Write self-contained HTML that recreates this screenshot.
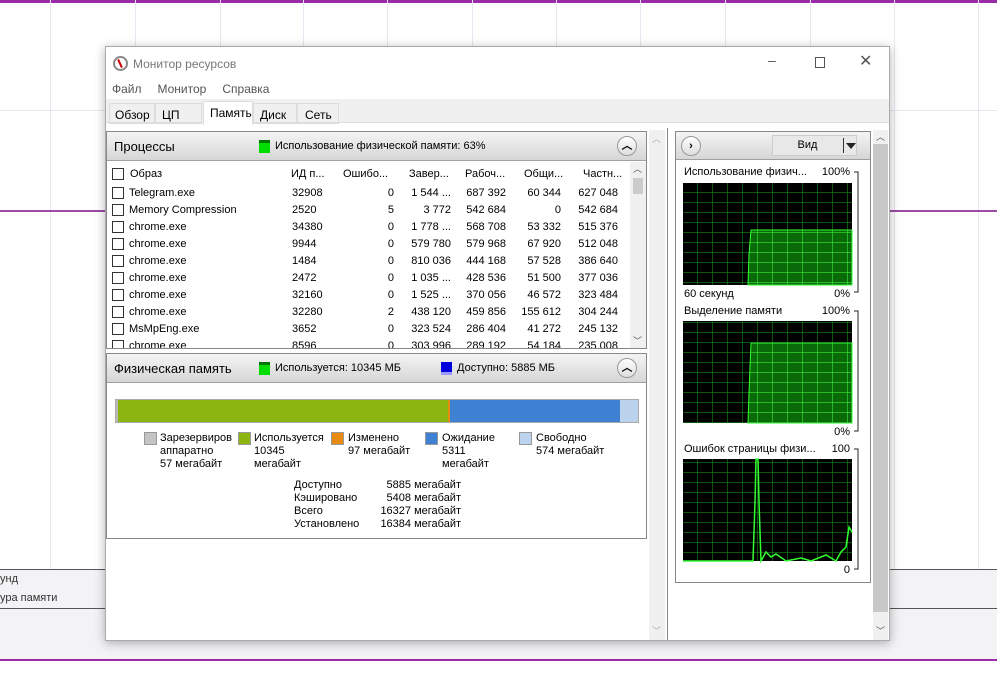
<!DOCTYPE html><html><head><meta charset="utf-8"><style>
*{box-sizing:border-box;margin:0;padding:0}
body{width:997px;height:687px;position:relative;overflow:hidden;background:#fff;font-family:"Liberation Sans","Noto Sans CJK SC",sans-serif;font-size:11px;color:#000}
.a{position:absolute}
.vl{position:absolute;top:0;width:1px;height:569px;background:#ece4f0}
.hdr{background:linear-gradient(#f4f4f4,#d6d6d6);border-bottom:1px solid #a0a0a0}
.cb{position:absolute;width:12px;height:12px;border:1px solid #333;background:#fff}
.up{position:absolute;width:20px;height:20px;border-radius:50%;border:1px solid #999;background:linear-gradient(#fff,#ddd);text-align:center;font-size:11px;line-height:18px;font-weight:bold}
.r{text-align:right}
.sq{position:absolute;width:13px;height:13px;border:1px solid #999}
td{padding:0;vertical-align:middle}
</style></head><body>
<div class="a" style="left:0;top:0;width:997px;height:3px;background:#9b2aa6"></div>
<div class="vl" style="left:50px"></div><div class="vl" style="left:135px"></div><div class="vl" style="left:220px"></div><div class="vl" style="left:303px"></div><div class="vl" style="left:387px"></div><div class="vl" style="left:472px"></div><div class="vl" style="left:556px"></div><div class="vl" style="left:640px"></div><div class="vl" style="left:725px"></div><div class="vl" style="left:810px"></div><div class="vl" style="left:894px"></div><div class="vl" style="left:978px"></div>
<div class="a" style="left:0;top:110px;width:997px;height:1px;background:#ece4f0"></div>
<div class="a" style="left:0;top:210px;width:997px;height:2px;background:#9b4aa6"></div>
<div class="a" style="left:0;top:569px;width:997px;height:90px;background:#f3f2f5;border-top:1px solid #555"></div>
<div class="a" style="left:0;top:608px;width:997px;height:1px;background:#555"></div>
<div class="a" style="left:0;top:573px;color:#333">унд</div>
<div class="a" style="left:0;top:592px;color:#333">ура памяти</div>
<div class="a" style="left:0;top:659px;width:997px;height:2px;background:#9b2aa6"></div>

<div class="a" style="left:105px;top:46px;width:785px;height:595px;background:#fff;border:1px solid #aaa;box-shadow:0 2px 10px rgba(0,0,0,.3)">
 <div class="a" style="left:7px;top:9px;width:15px;height:15px;border-radius:50%;border:2px solid #888;background:#fff"><div class="a" style="left:4px;top:1px;width:2px;height:9px;background:#c00;transform:rotate(-25deg)"></div></div>
 <div class="a" style="left:27px;top:10px;font-size:12px;color:#777">Монитор ресурсов</div>
 <div class="a" style="left:662px;top:5px;font-size:14px;color:#555">–</div>
 <div class="a" style="left:709px;top:10px;width:10px;height:11px;border:1px solid #555"></div>
 <div class="a" style="left:753px;top:4px;font-size:16px;color:#555">✕</div>
 <div class="a" style="left:6px;top:35px;font-size:12px;color:#555;word-spacing:2px">Файл &nbsp; Монитор &nbsp; Справка</div>
 <div class="a" style="left:0;top:52px;width:783px;height:24px;background:#f0f0f0;border-bottom:1px solid #ddd"></div>
 <div class="a" style="left:3px;top:56px;width:46px;height:21px;border:1px solid #ddd;font-size:12px;padding:4px 5px">Обзор</div>
 <div class="a" style="left:49px;top:56px;width:47px;height:21px;border:1px solid #ddd;font-size:12px;padding:4px 6px">ЦП</div>
 <div class="a" style="left:97px;top:54px;width:50px;height:24px;background:#fff;border:1px solid #ddd;border-bottom:0;font-size:12px;padding:4px 6px">Память</div>
 <div class="a" style="left:147px;top:56px;width:44px;height:21px;border:1px solid #ddd;font-size:12px;padding:4px 6px">Диск</div>
 <div class="a" style="left:191px;top:56px;width:42px;height:21px;border:1px solid #ddd;font-size:12px;padding:4px 7px">Сеть</div>
</div>

<!-- processes -->
<div class="a" style="left:106px;top:131px;width:541px;height:218px;border:1px solid #888;background:#fff;overflow:hidden">
 <div class="a hdr" style="left:0;top:0;width:539px;height:29px"></div>
 <div class="a" style="left:7px;top:7px;font-size:13px">Процессы</div>
 <div class="a" style="left:152px;top:8px;width:11px;height:13px;background:#0d0;border-top:3px solid #070"></div>
 <div class="a" style="left:168px;top:8px">Использование физической памяти: 63%</div>
 <div class="up" style="left:510px;top:4px">︿</div>
 <div class="cb" style="left:5px;top:36px"></div><div class="a" style="left:23px;top:36px">Образ</div>
 <div class="a" style="left:184px;top:36px">ИД п...</div><div class="a" style="left:236px;top:36px">Ошибо...</div><div class="a" style="left:302px;top:36px">Завер...</div><div class="a" style="left:358px;top:36px">Рабоч...</div><div class="a" style="left:417px;top:36px">Общи...</div><div class="a" style="left:476px;top:36px">Частн...</div>
 <div class="a" style="left:523px;top:30px;width:16px;height:188px;background:#f0f0f0"><div class="a" style="left:3px;top:16px;width:10px;height:16px;background:#ccc"></div><div class="a" style="left:3px;top:0;font-size:9px;color:#555">︿</div><div class="a" style="left:3px;top:172px;font-size:9px;color:#555">﹀</div></div>
</div>

<div class="a" style="left:107px;top:184px;width:522px;height:164px;overflow:hidden">
<table style="border-collapse:collapse;font-size:11px;position:absolute;left:0;top:0">
<colgroup><col style="width:22px"><col style="width:163px"><col style="width:47px"><col style="width:55px"><col style="width:57px"><col style="width:55px"><col style="width:55px"><col style="width:57px"></colgroup>
<tr style="height:17px"><td><div class="cb" style="position:relative;left:5px"></div></td><td>Telegram.exe</td><td>32908</td><td class="r">0</td><td class="r">1 544 ...</td><td class="r">687 392</td><td class="r">60 344</td><td class="r">627 048</td></tr>
<tr style="height:17px"><td><div class="cb" style="position:relative;left:5px"></div></td><td>Memory Compression</td><td>2520</td><td class="r">5</td><td class="r">3 772</td><td class="r">542 684</td><td class="r">0</td><td class="r">542 684</td></tr>
<tr style="height:17px"><td><div class="cb" style="position:relative;left:5px"></div></td><td>chrome.exe</td><td>34380</td><td class="r">0</td><td class="r">1 778 ...</td><td class="r">568 708</td><td class="r">53 332</td><td class="r">515 376</td></tr>
<tr style="height:17px"><td><div class="cb" style="position:relative;left:5px"></div></td><td>chrome.exe</td><td>9944</td><td class="r">0</td><td class="r">579 780</td><td class="r">579 968</td><td class="r">67 920</td><td class="r">512 048</td></tr>
<tr style="height:17px"><td><div class="cb" style="position:relative;left:5px"></div></td><td>chrome.exe</td><td>1484</td><td class="r">0</td><td class="r">810 036</td><td class="r">444 168</td><td class="r">57 528</td><td class="r">386 640</td></tr>
<tr style="height:17px"><td><div class="cb" style="position:relative;left:5px"></div></td><td>chrome.exe</td><td>2472</td><td class="r">0</td><td class="r">1 035 ...</td><td class="r">428 536</td><td class="r">51 500</td><td class="r">377 036</td></tr>
<tr style="height:17px"><td><div class="cb" style="position:relative;left:5px"></div></td><td>chrome.exe</td><td>32160</td><td class="r">0</td><td class="r">1 525 ...</td><td class="r">370 056</td><td class="r">46 572</td><td class="r">323 484</td></tr>
<tr style="height:17px"><td><div class="cb" style="position:relative;left:5px"></div></td><td>chrome.exe</td><td>32280</td><td class="r">2</td><td class="r">438 120</td><td class="r">459 856</td><td class="r">155 612</td><td class="r">304 244</td></tr>
<tr style="height:17px"><td><div class="cb" style="position:relative;left:5px"></div></td><td>MsMpEng.exe</td><td>3652</td><td class="r">0</td><td class="r">323 524</td><td class="r">286 404</td><td class="r">41 272</td><td class="r">245 132</td></tr>
<tr style="height:17px"><td><div class="cb" style="position:relative;left:5px"></div></td><td>chrome.exe</td><td>8596</td><td class="r">0</td><td class="r">303 996</td><td class="r">289 192</td><td class="r">54 184</td><td class="r">235 008</td></tr>
</table></div>

<!-- physical memory -->
<div class="a" style="left:106px;top:353px;width:541px;height:186px;border:1px solid #888;background:#fff">
 <div class="a hdr" style="left:0;top:0;width:539px;height:29px"></div>
 <div class="a" style="left:7px;top:7px;font-size:13px">Физическая память</div>
 <div class="a" style="left:152px;top:8px;width:11px;height:13px;background:#0d0;border-top:3px solid #070"></div>
 <div class="a" style="left:168px;top:8px">Используется: 10345 МБ</div>
 <div class="a" style="left:334px;top:8px;width:11px;height:13px;background:#00d;border-bottom:3px solid #99f"></div>
 <div class="a" style="left:350px;top:8px">Доступно: 5885 МБ</div>
 <div class="up" style="left:510px;top:4px">︿</div>
 <div class="a" style="left:8px;top:45px;width:524px;height:24px;border:1px solid #aaa;display:flex">
  <div style="width:2px;background:#bbb"></div><div style="width:330px;background:#8db511"></div><div style="width:2px;background:#e78b10"></div><div style="width:170px;background:#3f82d3"></div><div style="flex:1;background:#bcd3ee"></div></div>
 <div class="sq" style="left:37px;top:78px;background:#c4c4c4"></div><div class="a" style="left:53px;top:78px;line-height:13px;width:72px;overflow:hidden;white-space:nowrap">Зарезервировано<br>аппаратно<br>57 мегабайт</div>
 <div class="sq" style="left:131px;top:78px;background:#8db511"></div><div class="a" style="left:147px;top:78px;line-height:13px">Используется<br>10345<br>мегабайт</div>
 <div class="sq" style="left:224px;top:78px;background:#e78b10"></div><div class="a" style="left:241px;top:78px;line-height:13px">Изменено<br>97 мегабайт</div>
 <div class="sq" style="left:318px;top:78px;background:#3f82d3"></div><div class="a" style="left:335px;top:78px;line-height:13px">Ожидание<br>5311<br>мегабайт</div>
 <div class="sq" style="left:412px;top:78px;background:#bcd3ee"></div><div class="a" style="left:429px;top:78px;line-height:13px">Свободно<br>574 мегабайт</div>
 <div class="a" style="left:187px;top:125px;line-height:13px">Доступно<br>Кэшировано<br>Всего<br>Установлено</div>
 <div class="a r" style="left:250px;top:125px;width:104px;line-height:13px">5885 мегабайт<br>5408 мегабайт<br>16327 мегабайт<br>16384 мегабайт</div>
</div>
<div class="a" style="left:649px;top:130px;width:16px;height:510px;background:#f0f0f0"><div class="a" style="left:3px;top:2px;font-size:9px;color:#aaa">︿</div><div class="a" style="left:3px;top:494px;font-size:9px;color:#aaa">﹀</div></div>
<div class="a" style="left:667px;top:128px;width:1px;height:512px;background:#888"></div>

<!-- right panel -->
<div class="a" style="left:675px;top:131px;width:196px;height:452px;border:1px solid #888;background:#fff">
 <div class="a hdr" style="left:0;top:0;width:194px;height:28px"></div>
 <div class="up" style="left:5px;top:4px">›</div>
 <div class="a" style="left:96px;top:3px;width:85px;height:21px;background:#e8e8e8;border:1px solid #ccc;text-align:center;line-height:19px;padding-right:14px">Вид<div class="a" style="left:70px;top:2px;width:1px;height:15px;background:#333"></div><div class="a" style="left:73px;top:7px;border:5px solid transparent;border-top:6px solid #222"></div></div>
 <div class="a" style="left:8px;top:34px">Использование физич...</div><div class="a r" style="left:140px;top:34px;width:34px">100%</div>
 <div class="a" style="left:8px;top:156px">60 секунд</div><div class="a r" style="left:140px;top:156px;width:34px">0%</div>
 <div class="a" style="left:8px;top:173px">Выделение памяти</div><div class="a r" style="left:140px;top:173px;width:34px">100%</div>
 <div class="a r" style="left:140px;top:294px;width:34px">0%</div>
 <div class="a" style="left:8px;top:311px">Ошибок страницы физи...</div><div class="a r" style="left:140px;top:311px;width:34px">100</div>
 <div class="a r" style="left:140px;top:432px;width:34px">0</div>
 <svg class="a" style="left:0;top:0" width="196" height="452">
  <defs>
   <pattern id="g" x="7" y="51" width="15" height="10" patternUnits="userSpaceOnUse"><path d="M15 0V10M0 10H15" stroke="#138a13" stroke-width="1.2"/></pattern>
   <pattern id="gb" x="7" y="51" width="15" height="10" patternUnits="userSpaceOnUse"><path d="M15 0V10M0 10H15" stroke="#3be83b" stroke-width="1.2"/></pattern>
  </defs>
  <g stroke="#222" fill="none"><path d="M178 40h4v120h-4M178 179h4v120h-4M178 317h4v120h-4"/></g>
  <rect x="7" y="51" width="169" height="102" fill="#000"/>
  <rect x="7" y="51" width="169" height="102" fill="url(#g)"/>
  <path d="M72 153 L73 122 L75 98 L176 98 L176 153Z" fill="#0a6a0a" stroke="#3f3"/>
  <path d="M72 153 L73 122 L75 98 L176 98 L176 153Z" fill="url(#gb)"/>
  <rect x="7" y="189" width="169" height="102" fill="#000"/>
  <rect x="7" y="189" width="169" height="102" fill="url(#g)"/>
  <path d="M72 291 L73 260 L75 211 L176 211 L176 291Z" fill="#0a6a0a" stroke="#3f3"/>
  <path d="M72 291 L73 260 L75 211 L176 211 L176 291Z" fill="url(#gb)"/>
  <rect x="7" y="327" width="169" height="102" fill="#000"/>
  <rect x="7" y="327" width="169" height="102" fill="url(#g)"/>
  <path d="M7 429 L77 429 L79 370 L80 327 L82 327 L83 370 L85 429 L90 420 L95 425 L100 422 L110 429 L125 426 L135 429 L150 423 L160 429 L165 420 L170 415 L173 395 L176 400" fill="none" stroke="#3f3" stroke-width="1.5"/>
 </svg>
</div>
<div class="a" style="left:873px;top:130px;width:15px;height:510px;background:#f0f0f0"><div class="a" style="left:0;top:14px;width:15px;height:468px;background:#c8c8c8"></div><div class="a" style="left:3px;top:0;font-size:9px;color:#555">︿</div><div class="a" style="left:3px;top:494px;font-size:9px;color:#555">﹀</div></div>
</body></html>
